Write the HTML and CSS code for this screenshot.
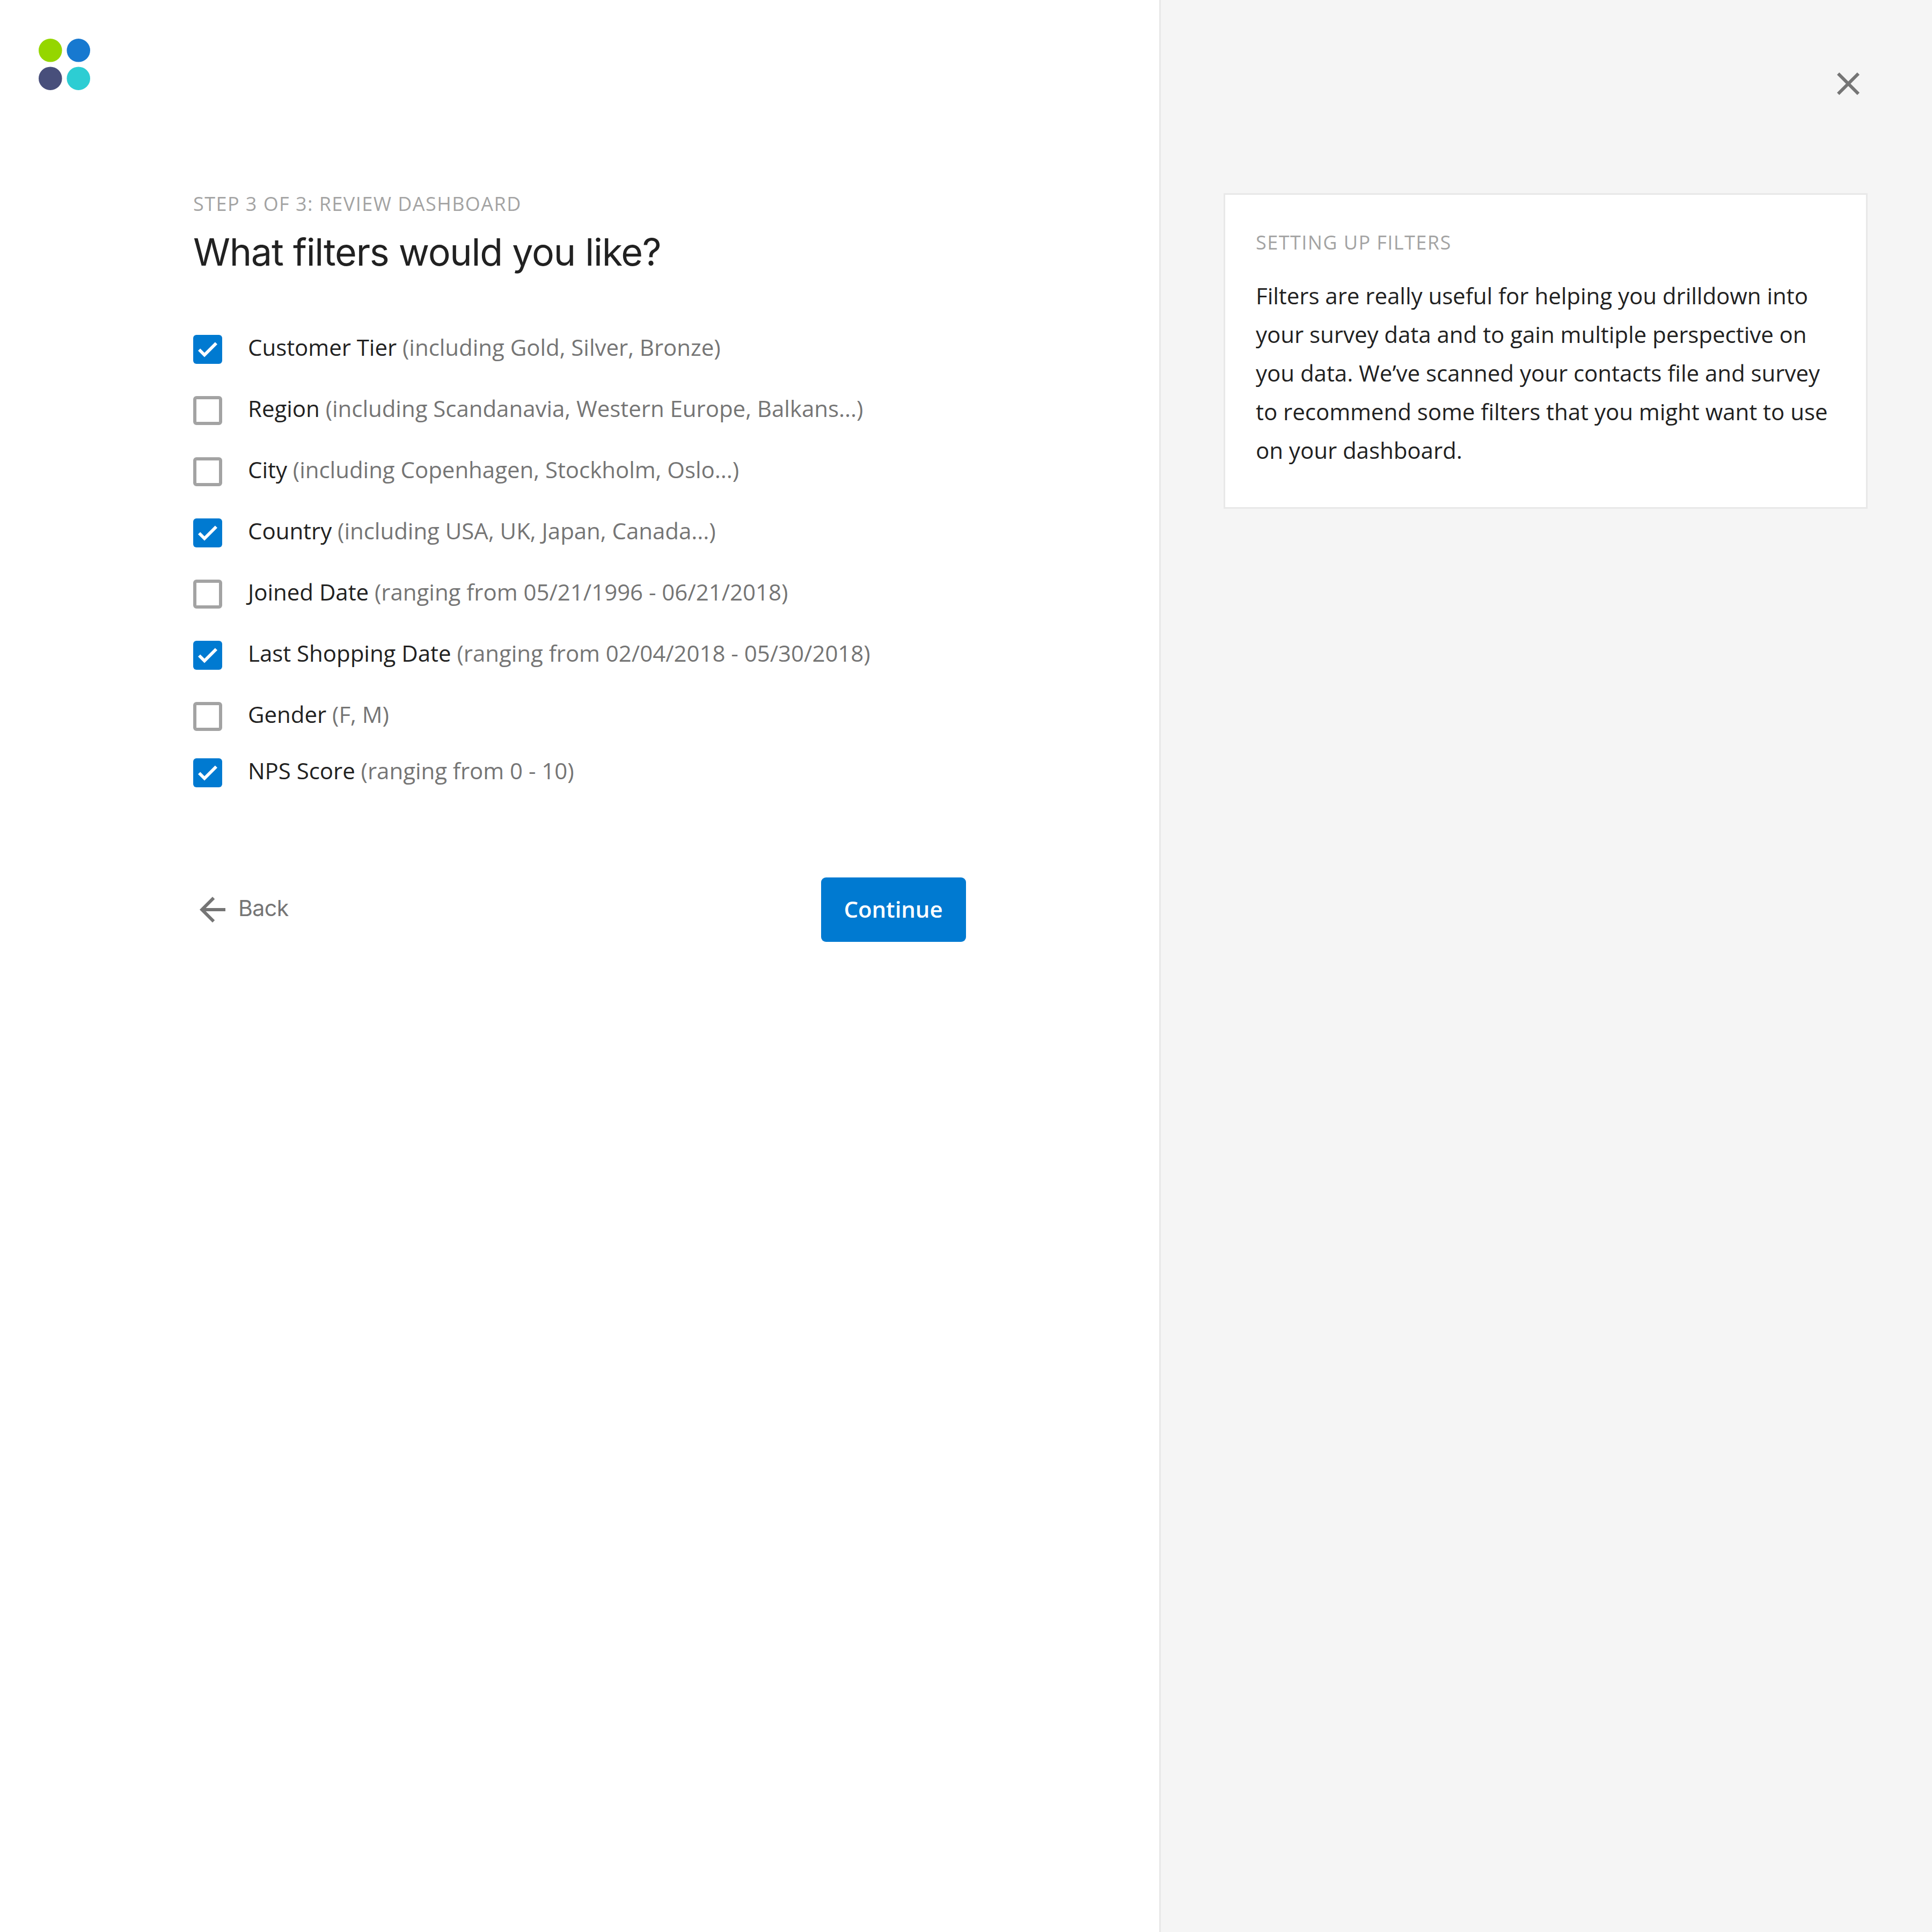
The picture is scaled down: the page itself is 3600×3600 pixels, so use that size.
FILE: index.html
```html
<!DOCTYPE html>
<html lang="en">
<head>
  <meta charset="utf-8">
  <title>Review dashboard</title>
  <link rel="stylesheet" href="styles.css">
</head>
<body>
  <svg width="0" height="0" class="sprite" aria-hidden="true">
    <symbol id="check" viewBox="0 0 54 54"><path d="M9 29.6 13.2 25.4 21 33.2 40.8 13.4 45 17.6 21 41.6z"/></symbol>
  </svg>
  <div class="page">
    <main class="main">
      <svg class="logo" viewBox="0 0 96 96" aria-hidden="true">
        <circle cx="21.8" cy="21.8" r="21.8" fill="#95d600"/>
        <circle cx="74.2" cy="21.8" r="21.8" fill="#1779d0"/>
        <circle cx="21.8" cy="74.2" r="21.8" fill="#484f7b"/>
        <circle cx="74.2" cy="74.2" r="21.8" fill="#2dcdd3"/>
      </svg>
      <div class="content">
        <p class="eyebrow">STEP 3 OF 3: REVIEW DASHBOARD</p>
        <h1 class="title">What filters would you like?</h1>
        <ul class="filters">
          <li class="filter"><span class="box box-on"><svg class="tick"><use href="#check"/></svg></span><span class="label">Customer Tier <span class="hint">(including Gold, Silver, Bronze)</span></span></li>
          <li class="filter"><span class="box"></span><span class="label">Region <span class="hint">(including Scandanavia, Western Europe, Balkans...)</span></span></li>
          <li class="filter"><span class="box"></span><span class="label">City <span class="hint">(including Copenhagen, Stockholm, Oslo...)</span></span></li>
          <li class="filter"><span class="box box-on"><svg class="tick"><use href="#check"/></svg></span><span class="label">Country <span class="hint">(including USA, UK, Japan, Canada...)</span></span></li>
          <li class="filter"><span class="box"></span><span class="label">Joined Date <span class="hint">(ranging from 05/21/1996 - 06/21/2018)</span></span></li>
          <li class="filter"><span class="box box-on"><svg class="tick"><use href="#check"/></svg></span><span class="label">Last Shopping Date <span class="hint">(ranging from 02/04/2018 - 05/30/2018)</span></span></li>
          <li class="filter"><span class="box"></span><span class="label">Gender <span class="hint">(F, M)</span></span></li>
          <li class="filter filter-last"><span class="box box-on"><svg class="tick"><use href="#check"/></svg></span><span class="label">NPS Score <span class="hint">(ranging from 0 - 10)</span></span></li>
        </ul>
        <div class="actions">
          <a class="back">
            <svg class="icon" viewBox="0 0 24 24" aria-hidden="true"><path d="M20 11H7.83l5.59-5.59L12 4l-8 8 8 8 1.41-1.41L7.83 13H20v-2z"/></svg>
            <span class="back-text">Back</span>
          </a>
          <button class="continue" type="button">Continue</button>
        </div>
      </div>
    </main>
    <aside class="side">
      <svg class="icon close" viewBox="0 0 24 24" aria-label="Close"><path d="M19 6.41 17.59 5 12 10.59 6.41 5 5 6.41 10.59 12 5 17.59 6.41 19 12 13.41 17.59 19 19 17.59 13.41 12z"/></svg>
      <section class="card">
        <h2 class="eyebrow">SETTING UP FILTERS</h2>
        <p class="card-text">Filters are really useful for helping you drilldown into your survey data and to gain multiple perspective on you data. We’ve scanned your contacts file and survey to recommend some filters that you might want to use on your dashboard.</p>
      </section>
    </aside>
  </div>
</body>
</html>
```
FILE: styles.css
```css
* {
  box-sizing: border-box;
  margin: 0;
  padding: 0;
}

body {
  background: #fff;
  color: #212121;
  font: 400 42px "Open Sans", sans-serif;
}

.sprite {
  position: absolute;
}

.page {
  display: flex;
  min-height: 3600px;
}

.main {
  flex: 1;
  padding: 72px 360px 0 72px;
}

.logo {
  display: block;
  width: 96px;
  height: 96px;
}

.content {
  margin: 185px 0 0 288px;
}

.eyebrow {
  color: #a3a3a3;
  font-size: 36px;
  font-weight: 400;
  line-height: 54px;
  letter-spacing: 1.45px;
}

.title {
  margin-top: 18px;
  font: 400 70px/90px Inter, sans-serif;
  letter-spacing: -1.25px;
}

.filters {
  display: flex;
  flex-direction: column;
  gap: 60px;
  margin-top: 109px;
  list-style: none;
}

.filter {
  display: flex;
  align-items: flex-start;
  gap: 48px;
  height: 54px;
}

.filter-last {
  margin-top: -9px;
}

.box {
  flex: none;
  width: 54px;
  height: 54px;
  border: 6px solid #a3a3a3;
  border-radius: 6px;
}

.box-on {
  border: 0;
  background: #007ad1;
}

.tick {
  display: block;
  width: 54px;
  height: 54px;
  fill: #fff;
}

.label {
  line-height: 46px;
  letter-spacing: -0.03px;
  white-space: nowrap;
}

.hint {
  color: #757575;
}

.actions {
  display: flex;
  justify-content: space-between;
  align-items: center;
  margin-top: 168px;
}

.icon {
  display: block;
  width: 72px;
  height: 72px;
  fill: #757575;
}

.back {
  display: flex;
  align-items: center;
  gap: 12px;
  color: #757575;
}

.back-text {
  padding-bottom: 6px;
  font: 400 41px/60px Inter, sans-serif;
  letter-spacing: -0.5px;
}

.continue {
  width: 270px;
  height: 120px;
  padding: 0 1px 4px 0;
  border: 0;
  border-radius: 9px;
  background: #007ad1;
  color: #fff;
  font: 600 42px "Open Sans", sans-serif;
  letter-spacing: -0.1px;
}

.side {
  width: 1440px;
  padding: 120px 120px 0 117px;
  border-left: 3px solid #e8e8e8;
  background: #f5f5f5;
}

.close {
  margin-left: auto;
}

.card {
  margin-top: 168px;
  padding: 62px 56px 70px 57px;
  border: 3px solid #e8e8e8;
  background: #fff;
}

.card-text {
  margin-top: 36px;
  line-height: 72px;
  letter-spacing: -0.02px;
}
```
